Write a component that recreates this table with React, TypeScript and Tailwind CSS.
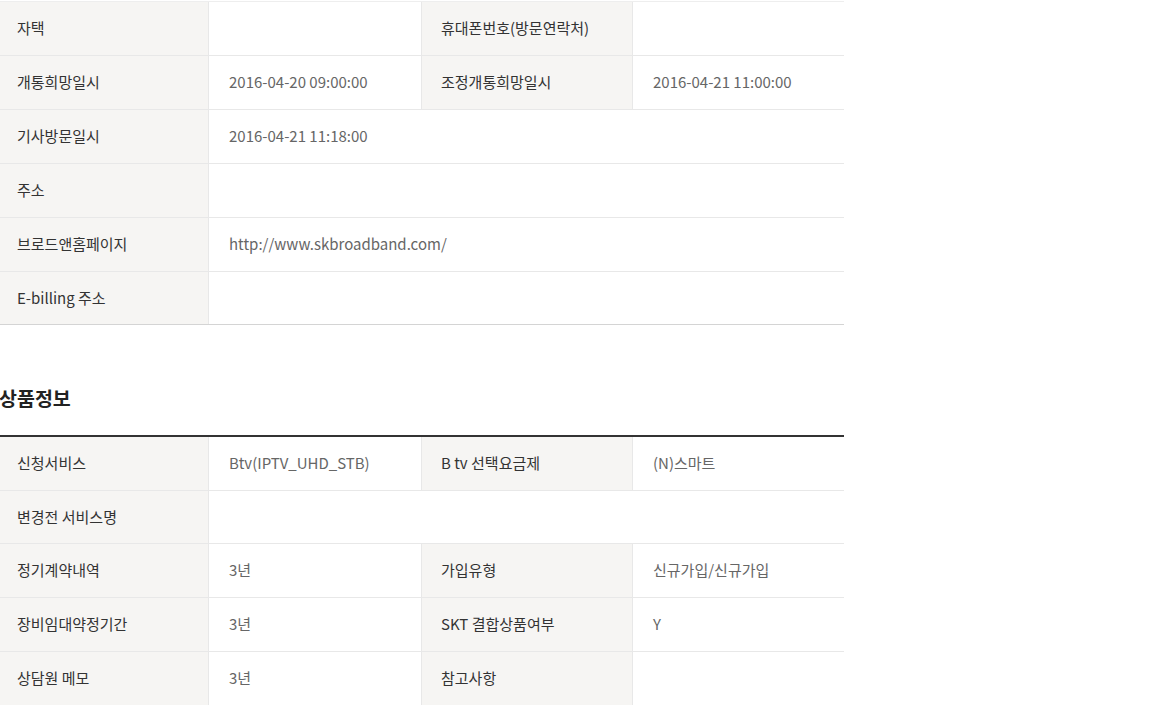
import React from "react";

type Cell = { label: string; value?: string; span?: boolean };
type Row = Cell[];

const font = { fontFamily: '"Noto Sans CJK KR", "Noto Sans", sans-serif' };

const table1: Row[] = [
  [{ label: "자택", value: "" }, { label: "휴대폰번호(방문연락처)", value: "" }],
  [
    { label: "개통희망일시", value: "2016-04-20 09:00:00" },
    { label: "조정개통희망일시", value: "2016-04-21 11:00:00" },
  ],
  [{ label: "기사방문일시", value: "2016-04-21 11:18:00", span: true }],
  [{ label: "주소", value: "", span: true }],
  [{ label: "브로드앤홈페이지", value: "http://www.skbroadband.com/", span: true }],
  [{ label: "E-billing 주소", value: "", span: true }],
];
const heights1 = ["h-[54px]", "h-[54px]", "h-[54px]", "h-[54px]", "h-[54px]", "h-[53px]"];

const table2: Row[] = [
  [
    { label: "신청서비스", value: "Btv(IPTV_UHD_STB)" },
    { label: "B tv 선택요금제", value: "(N)스마트" },
  ],
  [{ label: "변경전 서비스명", value: "", span: true }],
  [
    { label: "정기계약내역", value: "3년" },
    { label: "가입유형", value: "신규가입/신규가입" },
  ],
  [
    { label: "장비임대약정기간", value: "3년" },
    { label: "SKT 결합상품여부", value: "Y" },
  ],
  [
    { label: "상담원 메모", value: "3년" },
    { label: "참고사항", value: "" },
  ],
];
const heights2 = ["h-[54px]", "h-[53px]", "h-[54px]", "h-[54px]", "h-[54px]"];

function TableRow({ row, h, borderColor }: { row: Row; h: string; borderColor: string }) {
  return (
    <div className={`grid grid-cols-[209px_212px_212px_211px] ${h} border-b ${borderColor}`}>
      {row.map((c, i) => (
        <React.Fragment key={i}>
          <div
            className={`flex items-center bg-[#f6f5f3] text-[15px] text-[#333] border-r border-[#e8e8e8] ${
              i > 0 ? "border-l pl-[19px]" : "pl-[17px]"
            }`}
          >
            {c.label}
          </div>
          <div
            className={`flex items-center pl-[20px] text-[15px] text-[#666] ${
              c.span ? "col-span-3" : ""
            }`}
          >
            {c.value}
          </div>
        </React.Fragment>
      ))}
    </div>
  );
}

export default function App() {
  return (
    <div className="w-[1152px] h-[705px] bg-white overflow-hidden" style={font}>
      <div className="w-[844px] pt-[1px]">
        <div className="border-t border-[#eeeeee]">
          {table1.map((r, i) => (
            <TableRow
              key={i}
              row={r}
              h={heights1[i]}
              borderColor={i === table1.length - 1 ? "border-[#d4d4d4]" : "border-[#e8e8e8]"}
            />
          ))}
        </div>
        <h2 className="mt-[60px] ml-[-1px] text-[19.5px] font-bold text-[#222] leading-[26px]">상품정보</h2>
        <div className="mt-[24px] border-t-2 border-[#333]">
          {table2.map((r, i) => (
            <TableRow key={i} row={r} h={heights2[i]} borderColor="border-[#e8e8e8]" />
          ))}
        </div>
      </div>
    </div>
  );
}
